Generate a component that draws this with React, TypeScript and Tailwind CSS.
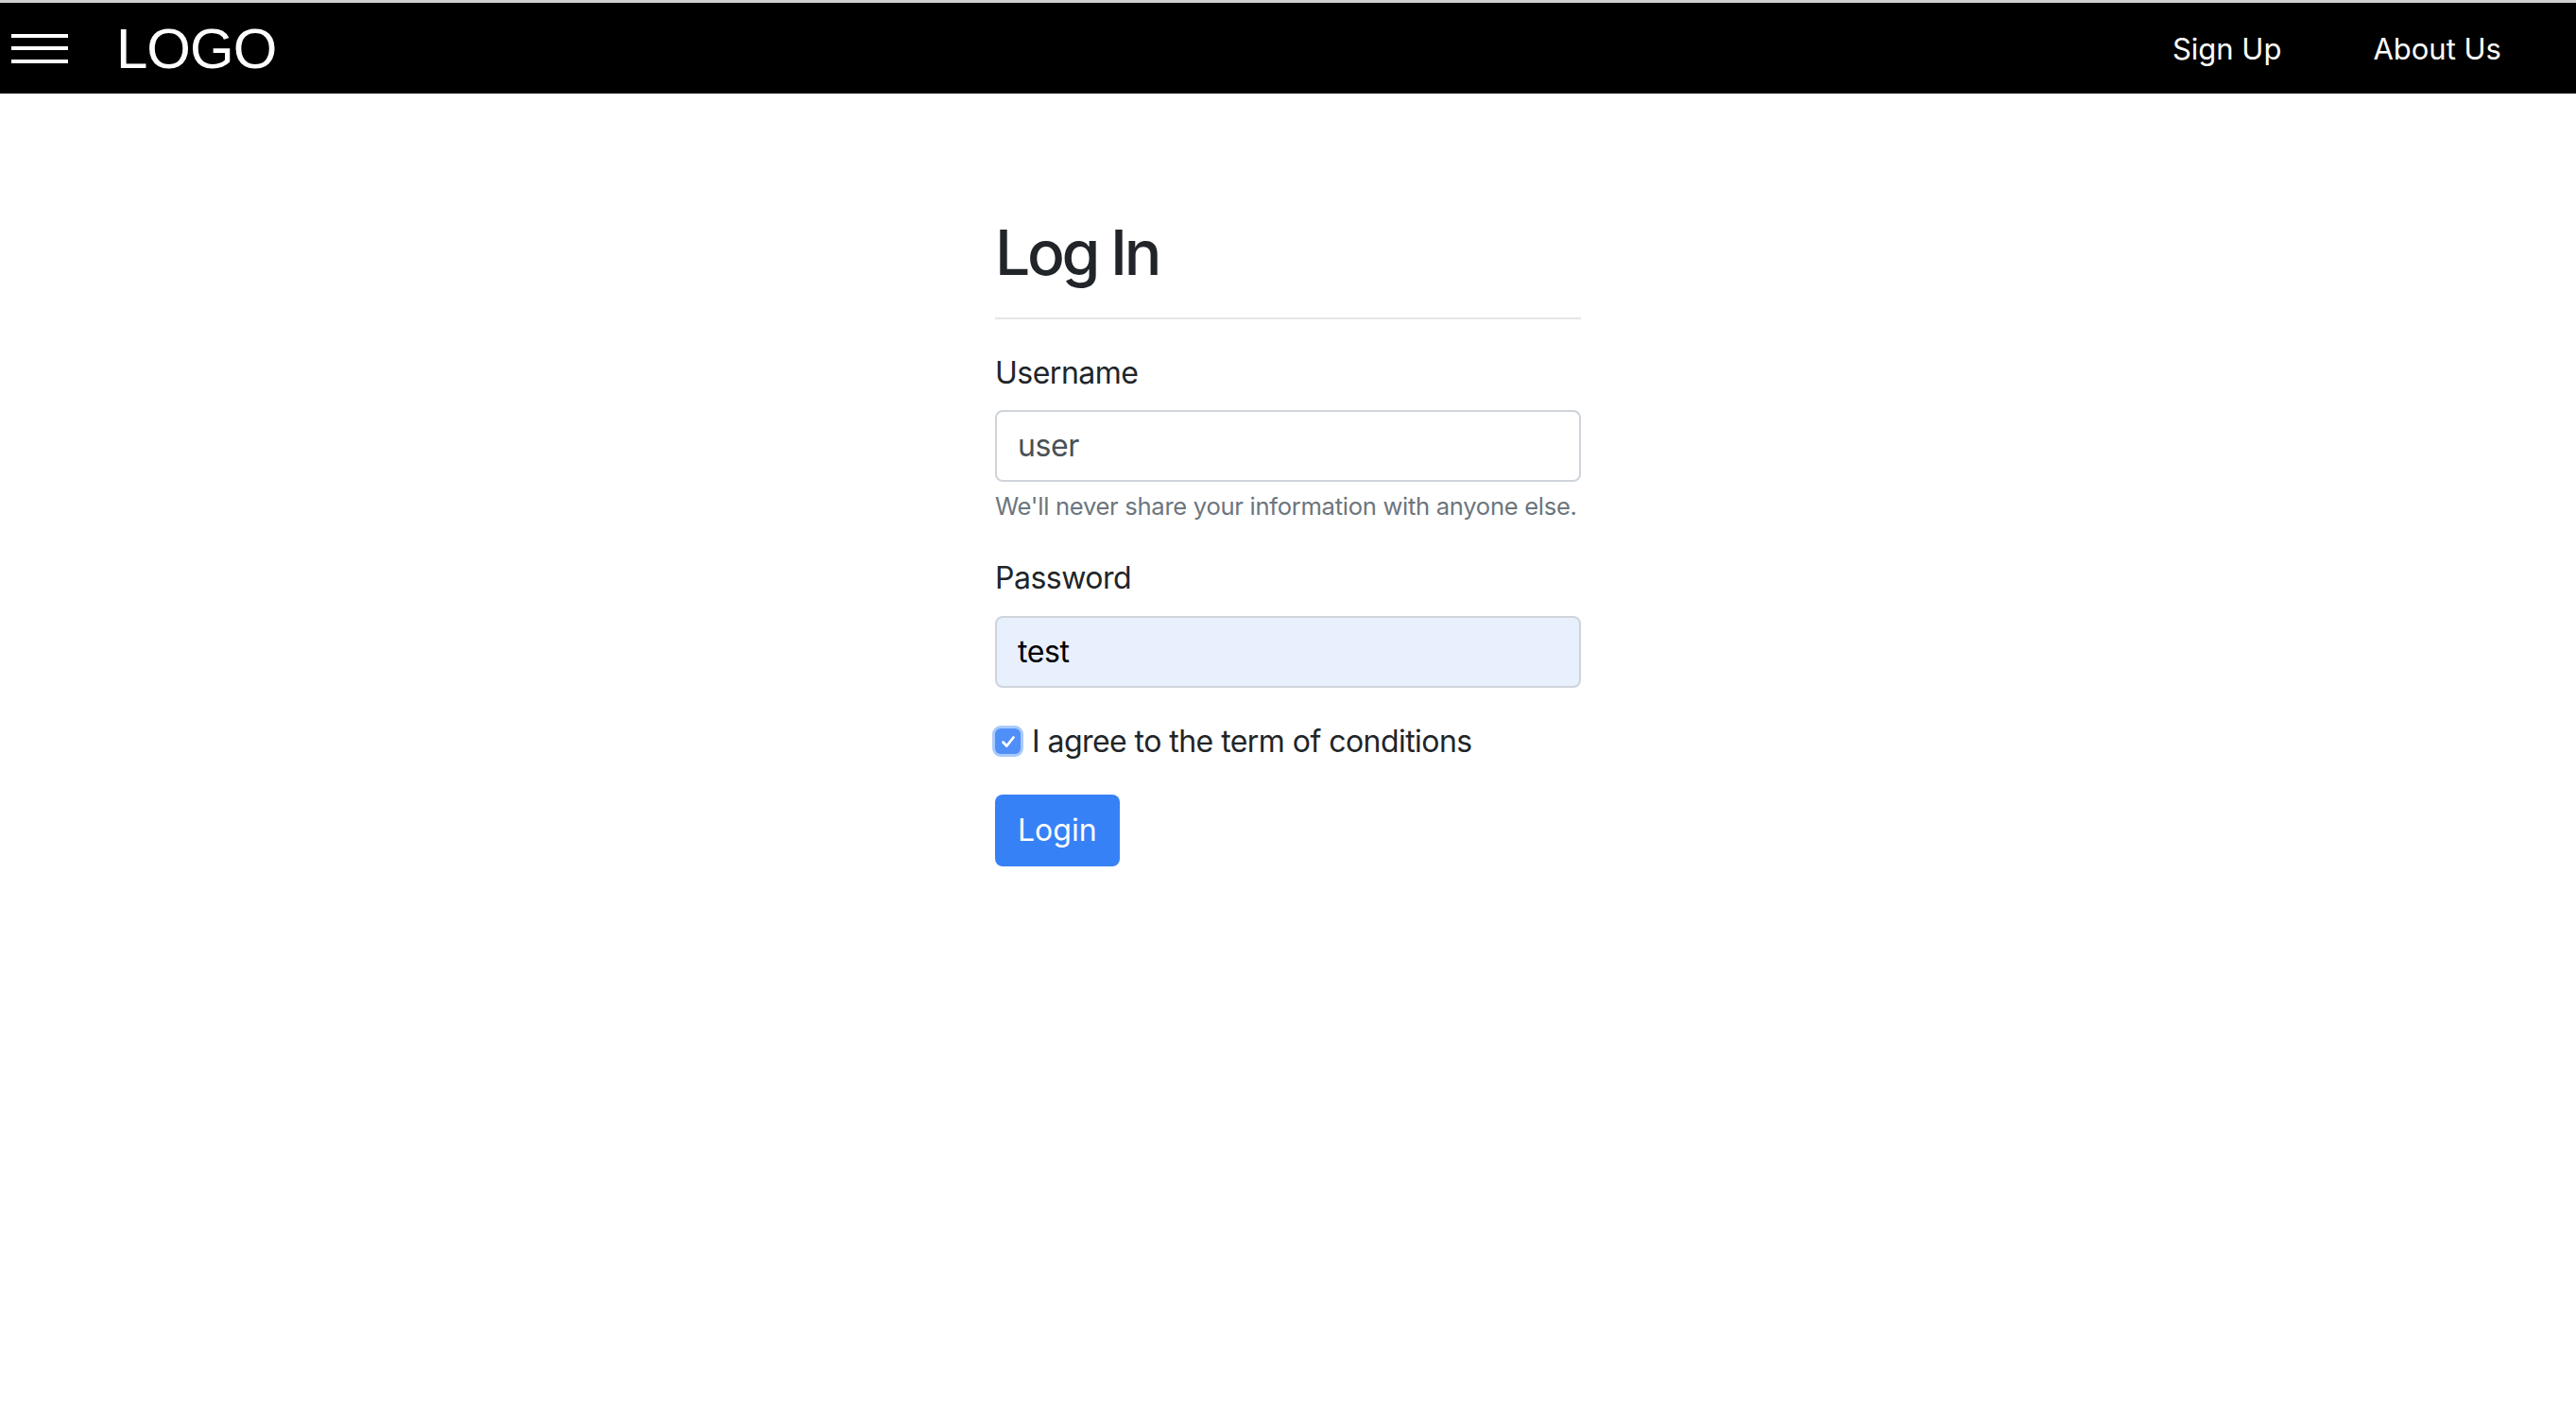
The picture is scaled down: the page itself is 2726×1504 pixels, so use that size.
import React from "react";

export default function App() {
  return (
    <div className="min-h-[1504px] w-full bg-white font-['Inter',sans-serif] text-[#212529]">
      <div className="h-[3px] w-full bg-[#cfcfcf]" />
      <header className="flex h-[96px] w-full items-center bg-black text-white">
        <div className="ml-[12px] flex w-[60px] flex-col gap-[9.5px]">
          <span className="block h-[4px] w-full bg-white" />
          <span className="block h-[4px] w-full bg-white" />
          <span className="block h-[4px] w-full bg-white" />
        </div>
        <div className="ml-[51px] mt-[2px] font-['Liberation_Sans',Arial,sans-serif] text-[60px] leading-none tracking-[-1px]">
          LOGO
        </div>
        <nav className="ml-auto mr-[79px] flex items-center gap-[97px] text-[31px] leading-none">
          <a className="cursor-pointer">Sign Up</a>
          <a className="cursor-pointer">About Us</a>
        </nav>
      </header>

      <main className="flex justify-center pt-[129px]">
        <form className="flex w-[620px] flex-col" onSubmit={(e) => e.preventDefault()}>
          <h1 className="text-[66px] font-medium leading-[1.2] tracking-[-3.4px] text-[#212529]">Log In</h1>
          <div className="mt-[29px] h-[2px] w-full bg-[#e6e6e6]" />

          <label className="mt-[33px] text-[32px] leading-[48px] tracking-[-0.5px]">Username</label>
          <div className="mt-[15px] flex h-[76px] items-center rounded-[8px] border-2 border-[#ced4da] bg-white px-[22px] text-[32px] tracking-[-0.4px] text-[#495057]">
            user
          </div>
          <p className="mt-[7px] whitespace-nowrap text-[25.6px] leading-[38.4px] tracking-[-0.3px] text-[#6c757d]">
            We'll never share your information with anyone else.
          </p>

          <label className="mt-[32px] text-[32px] leading-[48px] tracking-[-0.5px]">Password</label>
          <div className="mt-[16px] flex h-[76px] items-center rounded-[8px] border-2 border-[#ced4da] bg-[#e8f0fe] px-[22px] text-[32px] tracking-[-0.4px] text-black">
            test
          </div>

          <div className="mt-[33px] flex h-[48px] items-center">
            <div className="flex h-[27px] w-[27px] items-center justify-center rounded-[6px] bg-[#4f8ff7] shadow-[0_0_0_3px_#a8c9fb]">
              <svg width="20" height="20" viewBox="0 0 20 20" fill="none">
                <path d="M4.5 10.5 L8.3 14.5 L15.5 5.5" stroke="white" strokeWidth="2.8" strokeLinecap="round" strokeLinejoin="round" />
              </svg>
            </div>
            <span className="ml-[12px] text-[32px] leading-[48px] tracking-[-0.55px]">I agree to the term of conditions</span>
          </div>

          <div className="mt-[32px]">
            <button type="submit" className="h-[76px] rounded-[8px] bg-[#3781f6] px-[24px] text-[32px] text-white">
              Login
            </button>
          </div>
        </form>
      </main>
    </div>
  );
}
